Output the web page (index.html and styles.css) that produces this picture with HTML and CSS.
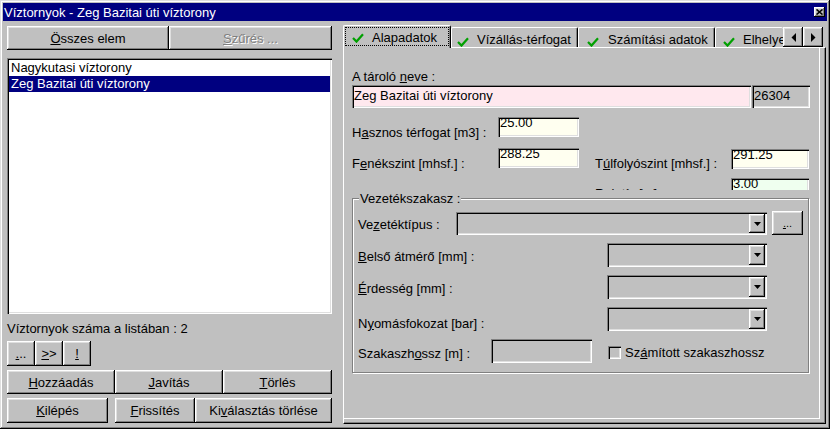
FILE: index.html
```html
<!DOCTYPE html>
<html lang="hu">
<head>
<meta charset="utf-8">
<title>Víztornyok</title>
<link rel="stylesheet" href="styles.css">
</head>
<body>
<div class="window">
  <div class="titlebar">
    <span class="title">Víztornyok - Zeg Bazitai úti víztorony</span>
    <span class="close raised"><svg width="7" height="6" viewBox="0 0 7 6"><path d="M0.5 0.5 L6.5 5.5 M6.5 0.5 L0.5 5.5" stroke="#000" stroke-width="1.6" fill="none"/></svg></span>
  </div>
  <div class="main">
    <div class="left">
      <div class="top2">
        <div class="btn raised"><span><u>Ö</u>sszes elem</span></div>
        <div class="btn raised disabled"><span><u>S</u>zűrés ...</span></div>
      </div>
      <div class="list sunken">
        <div class="item">Nagykutasi víztorony</div>
        <div class="item sel">Zeg Bazitai úti víztorony</div>
      </div>
      <div class="count">Víztornyok száma a listában : 2</div>
      <div class="small3">
        <div class="btn raised sbtn"><span><u>.</u>..</span></div>
        <div class="btn raised sbtn"><span><u>&gt;</u>&gt;</span></div>
        <div class="btn raised sbtn"><span><u>!</u></span></div>
      </div>
      <div class="row3">
        <div class="btn raised"><span><u>H</u>ozzáadás</span></div>
        <div class="btn raised"><span><u>J</u>avítás</span></div>
        <div class="btn raised"><span><u>T</u>örlés</span></div>
      </div>
      <div class="row4">
        <div class="btn raised b-exit"><span><u>K</u>ilépés</span></div>
        <div class="btn raised b-refresh"><span><u>F</u>rissítés</span></div>
        <div class="btn raised b-clear"><span>Ki<u>v</u>álasztás törlése</span></div>
      </div>
    </div>
    <div class="right">
      <div class="tabstrip">
        <div class="tab active">
          <div class="focus">
            <svg class="chk" width="12" height="10" viewBox="0 0 12 10"><path d="M1 5 L4.5 8.6 L11 1.2" stroke="#00a000" stroke-width="2.2" fill="none"/></svg>
            <span class="tt">Alapadatok</span>
          </div>
        </div>
        <div class="tab t2">
          <svg class="chk" width="12" height="10" viewBox="0 0 12 10"><path d="M1 5 L4.5 8.6 L11 1.2" stroke="#00a000" stroke-width="2.2" fill="none"/></svg>
          <span class="tt">Vízállás-térfogat</span>
        </div>
        <div class="tab t3">
          <svg class="chk" width="12" height="10" viewBox="0 0 12 10"><path d="M1 5 L4.5 8.6 L11 1.2" stroke="#00a000" stroke-width="2.2" fill="none"/></svg>
          <span class="tt">Számítási adatok</span>
        </div>
        <div class="tab t4">
          <svg class="chk" width="12" height="10" viewBox="0 0 12 10"><path d="M1 5 L4.5 8.6 L11 1.2" stroke="#00a000" stroke-width="2.2" fill="none"/></svg>
          <span class="tt">Elhelyezés</span>
        </div>
        <div class="scroll">
          <div class="abtn raised"><svg width="5" height="9" viewBox="0 0 5 9"><polygon points="5,0 5,9 0.5,4.5" fill="#000"/></svg></div>
          <div class="abtn raised"><svg width="5" height="9" viewBox="0 0 5 9"><polygon points="0,0 0,9 4.5,4.5" fill="#000"/></svg></div>
        </div>
      </div>
      <div class="tabbody">
        <div class="page">
          <div class="upper">
            <div class="lbl-name">A tároló <u>n</u>eve :</div>
            <div class="name-row">
              <div class="edit sunken name">Zeg Bazitai úti víztorony</div>
              <div class="edit sunken idbox">26304</div>
            </div>
            <div class="fields">
              <div class="flbl c1 r1">H<u>a</u>sznos térfogat [m3] :</div>
              <div class="edit sunken small ivory c2 r1">25.00</div>
              <div class="flbl c1 r2">F<u>e</u>nékszint [mhsf.] :</div>
              <div class="edit sunken small ivory c2 r2">288.25</div>
              <div class="flbl c4 r2">T<u>ú</u>lfolyószint [mhsf.] :</div>
              <div class="edit sunken small ivory c5 r2 down1">291.25</div>
              <div class="flbl c4 r3">Relatív [m] :</div>
              <div class="edit sunken small green c5 r3">3.00</div>
            </div>
          </div>
          <div class="group">
            <span class="legend">Vezetékszakasz :</span>
            <div class="grow ga">
              <div class="glbl wa pa">Ve<u>z</u>etéktípus :</div>
              <div class="combo sunken cwide"><div class="dd raised"><svg width="7" height="4" viewBox="0 0 7 4"><polygon points="0,0 7,0 3.5,4" fill="#000"/></svg></div></div>
              <div class="btn raised dots"><span><u>.</u>..</span></div>
            </div>
            <div class="grow">
              <div class="glbl wb pb"><u>B</u>első átmérő [mm] :</div>
              <div class="combo sunken cnarrow"><div class="dd raised"><svg width="7" height="4" viewBox="0 0 7 4"><polygon points="0,0 7,0 3.5,4" fill="#000"/></svg></div></div>
            </div>
            <div class="grow">
              <div class="glbl wb pc"><u>É</u>rdesség [mm] :</div>
              <div class="combo sunken cnarrow"><div class="dd raised"><svg width="7" height="4" viewBox="0 0 7 4"><polygon points="0,0 7,0 3.5,4" fill="#000"/></svg></div></div>
            </div>
            <div class="grow">
              <div class="glbl wb pd">N<u>y</u>omásfokozat [bar] :</div>
              <div class="combo sunken cnarrow"><div class="dd raised"><svg width="7" height="4" viewBox="0 0 7 4"><polygon points="0,0 7,0 3.5,4" fill="#000"/></svg></div></div>
            </div>
            <div class="grow">
              <div class="glbl we pe">Szakaszh<u>o</u>ssz [m] :</div>
              <div class="edit sunken len"></div>
              <div class="cbox sunken"></div>
              <div class="cblbl">Sz<u>á</u>mított szakaszhossz</div>
            </div>
          </div>
        </div>
      </div>
    </div>
  </div>
</div>
</body>
</html>
```

FILE: styles.css
```css
body {
  margin: 0;
  background: #c0c0c0;
  font-family: "Liberation Sans", Arial, sans-serif;
  font-size: 13px;
  line-height: 15px;
  color: #000;
}

u { text-decoration: underline; text-underline-offset: 1px; }

.window {
  width: 830px;
  height: 429px;
  box-sizing: border-box;
  padding: 3px;
  background: #c0c0c0;
  box-shadow: inset -1px -1px #000, inset 1px 1px #dfdfdf, inset -2px -2px #808080, inset 2px 2px #fff;
  display: flex;
  flex-direction: column;
}

.raised {
  box-shadow: inset -1px -1px #000, inset 1px 1px #fff, inset -2px -2px #808080, inset 2px 2px #dfdfdf;
}

.sunken {
  box-shadow: inset 1px 1px #808080, inset 2px 2px #000, inset -1px -1px #fff, inset -2px -2px #dfdfdf;
}

.titlebar {
  height: 18px;
  background: #000080;
  color: #fff;
  display: flex;
  align-items: center;
  justify-content: space-between;
  padding: 0 2px 0 1px;
  flex: none;
}

.title { white-space: nowrap; }

.close {
  width: 11px;
  height: 10px;
  background: #c0c0c0;
  display: flex;
  align-items: center;
  justify-content: center;
}

.main {
  display: flex;
  gap: 11px;
  padding: 4px 0 0 4px;
}

/* left side */
.left {
  width: 325px;
  padding-top: 1px;
  display: flex;
  flex-direction: column;
}

.btn {
  display: flex;
  align-items: center;
  justify-content: center;
  box-sizing: border-box;
  background: #c0c0c0;
  white-space: nowrap;
}

.disabled { color: #808080; text-shadow: 1px 1px 0 #fff; }

.top2 {
  display: grid;
  grid-template-columns: 162px 163px;
  height: 24px;
}

.list {
  margin-top: 8px;
  height: 256px;
  box-sizing: border-box;
  padding: 2px;
  background: #fff;
}

.item {
  height: 16px;
  line-height: 16px;
  padding-left: 2px;
  white-space: nowrap;
}

.item.sel { background: #000080; color: #fff; }

.count { margin-top: 7px; white-space: nowrap; }

.small3 {
  margin-top: 5px;
  display: flex;
  height: 25px;
}

.sbtn { width: 28px; }

.row3 {
  margin-top: 4px;
  display: grid;
  grid-template-columns: 108px 108px 109px;
  height: 24px;
}

.row4 {
  margin-top: 4px;
  display: flex;
  height: 25px;
}

.b-exit { width: 101px; margin-right: 7px; }
.b-refresh { width: 80px; }
.b-clear { width: 137px; }

/* right side */
.right { width: 483px; }

.tabstrip {
  position: relative;
  height: 22px;
  display: flex;
  align-items: flex-end;
}

.tab {
  box-sizing: border-box;
  height: 20px;
  display: flex;
  align-items: flex-start;
  border-left: 1px solid #fff;
  border-top: 1px solid #fff;
  border-right: 1px solid #000;
  border-radius: 2px 2px 0 0;
  box-shadow: inset -1px 0 #808080;
  background: #c0c0c0;
  white-space: nowrap;
  overflow: hidden;
  flex: none;
}

.tab .chk { margin-top: 9px; flex: none; }
.tab .tt { margin-top: 4px; margin-left: 8px; }

.tab.active {
  width: 108px;
  height: 23px;
  margin-bottom: -1px;
  position: relative;
  z-index: 1;
}

.focus {
  box-sizing: border-box;
  width: 104px;
  height: 19px;
  margin: 1px 0 0 1px;
  border: 1px dotted #000;
  padding-left: 6px;
  display: flex;
  align-items: flex-start;
}

.focus .chk { margin-top: 5px; }
.focus .tt { margin-top: 2px; }

.t2 { width: 127px; padding-left: 5px; }
.t3 { width: 137px; padding-left: 8px; }
.t3 .tt { margin-left: 9px; }
.t4 { width: 68px; padding-left: 7px; border-right: none; box-shadow: none; }

.scroll {
  position: absolute;
  right: 3px;
  top: 2px;
  display: flex;
  z-index: 2;
}

.abtn {
  width: 20px;
  height: 20px;
  background: #c0c0c0;
  display: flex;
  align-items: center;
  justify-content: center;
}

.tabbody {
  height: 377px;
  box-sizing: border-box;
  border-top: 1px solid #fff;
  border-left: 1px solid #fff;
  border-right: 1px solid #000;
  border-bottom: 1px solid #000;
  box-shadow: inset -1px -1px #808080;
}

.page {
  width: 476px;
  height: 371px;
  box-sizing: border-box;
  border-right: 1px solid #fff;
  border-bottom: 1px solid #fff;
}

.upper {
  height: 142px;
  overflow: hidden;
  padding-left: 8px;
  box-sizing: border-box;
}

.lbl-name { padding-top: 21px; white-space: nowrap; }

.name-row {
  display: flex;
  gap: 1px;
  margin-top: 1px;
  height: 23px;
}

.edit {
  box-sizing: border-box;
  padding: 3px 2px 0 2px;
  white-space: nowrap;
  overflow: hidden;
  background: #c0c0c0;
}

.name { width: 399px; background: #ffe8ee; }
.idbox { width: 58px; padding-left: 2px; }

.fields {
  display: grid;
  grid-template-columns: 146px 81px 16px 136px 78px;
  grid-template-rows: 31px 30px 20px;
  margin-top: 9px;
  align-items: start;
}

.flbl { padding-top: 8px; white-space: nowrap; }

.edit.small {
  height: 20px;
  padding: 0 1px 0 2px;
  line-height: 11px;
  overflow: visible;
}

.ivory { background: #fffff0; }
.green { background: #efffef; }
.down1 { margin-top: 1px; }

.c1 { grid-column: 1; }
.c2 { grid-column: 2; }
.c4 { grid-column: 4; }
.c5 { grid-column: 5; }
.r1 { grid-row: 1; }
.r2 { grid-row: 2; }
.r3 { grid-row: 3; }

.group {
  position: relative;
  margin: 8px 0 0 8px;
  width: 457px;
  height: 175px;
  box-sizing: border-box;
  border: 1px solid #808080;
  box-shadow: 1px 1px 0 #fff, inset 1px 1px 0 #fff;
  padding: 13px 0 0 5px;
}

.legend {
  position: absolute;
  left: 6px;
  top: -8px;
  padding: 0 1px;
  background: #c0c0c0;
  white-space: nowrap;
}

.grow {
  display: flex;
  align-items: flex-start;
  height: 24px;
  margin-bottom: 8px;
}

.grow.ga { height: 23px; }

.glbl { white-space: nowrap; flex: none; }
.wa { width: 98px; }
.wb { width: 249px; }
.we { width: 133px; }
.pa { padding-top: 5px; }
.pb { padding-top: 6px; }
.pc { padding-top: 6px; }
.pd { padding-top: 9px; }
.pe { padding-top: 7px; }

.combo {
  box-sizing: border-box;
  height: 24px;
  padding: 2px;
  display: flex;
  justify-content: flex-end;
  background: #c0c0c0;
  flex: none;
}

.cwide { width: 311px; height: 23px; }
.cnarrow { width: 160px; }

.dd {
  width: 16px;
  height: 100%;
  display: flex;
  align-items: center;
  justify-content: center;
}

.dots {
  width: 31px;
  height: 24px;
  margin: -1px 0 0 5px;
  font-size: 11px;
}

.len { width: 101px; height: 24px; flex: none; }

.cbox {
  width: 13px;
  height: 13px;
  margin: 7px 0 0 16px;
  background: #c0c0c0;
  flex: none;
}

.cblbl { margin-left: 4px; padding-top: 6px; white-space: nowrap; }
```
